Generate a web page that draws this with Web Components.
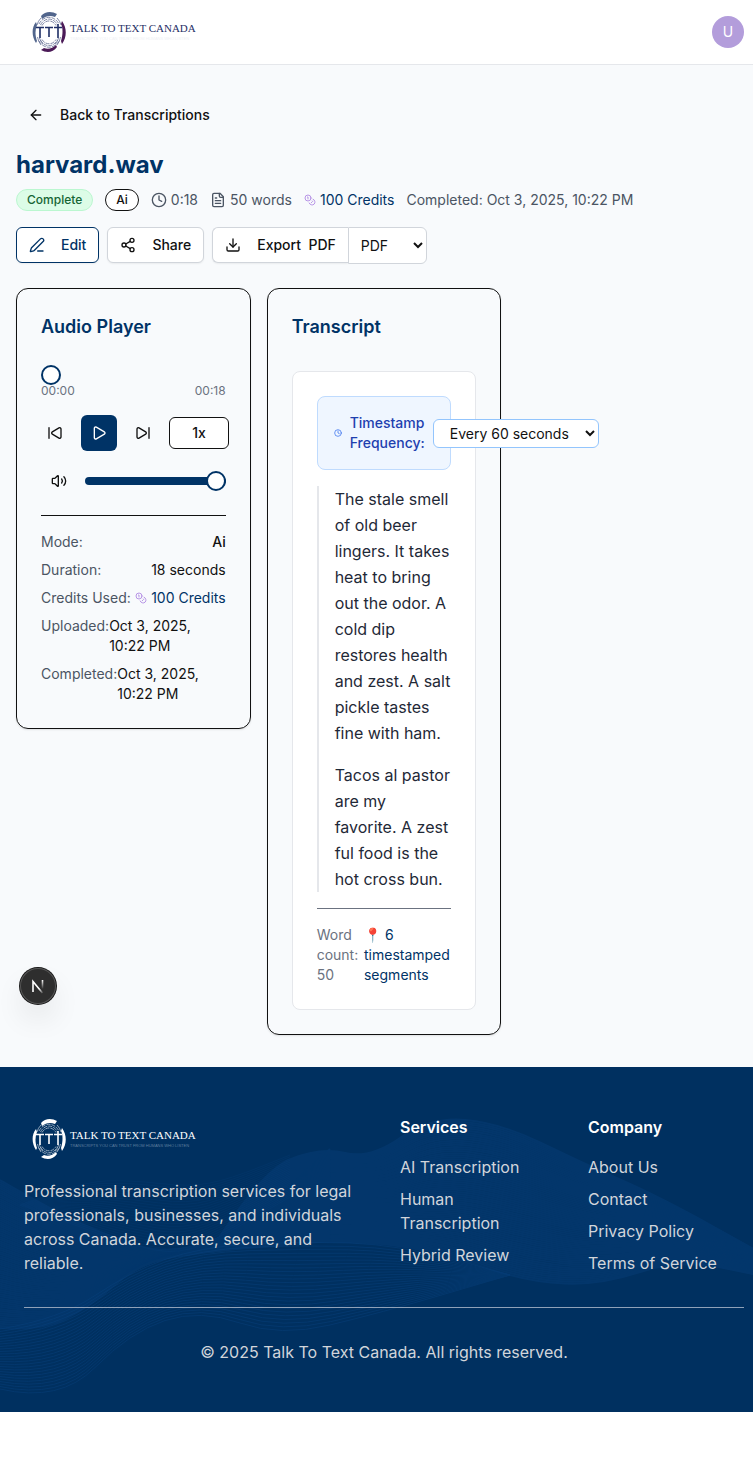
<!DOCTYPE html>
<html lang="en">
<head>
<meta charset="utf-8">
<meta name="viewport" content="width=device-width, initial-scale=1">
<title>harvard.wav – Talk To Text Canada</title>
<style>
  html { overflow-x: hidden; background: #fff; }
  body { margin: 0; min-width: 768px; font: 14px/20px Inter, "Liberation Sans", sans-serif; color: #111; }
</style>
</head>
<body>
<site-header></site-header>
<transcription-page></transcription-page>
<site-footer></site-footer>

<script>
const define = (name, html, setup) => {
  const template = document.createElement('template');
  template.innerHTML = html;
  customElements.define(name, class extends HTMLElement {
    constructor() {
      super();
      this.attachShadow({ mode: 'open' }).append(template.content.cloneNode(true));
    }
    connectedCallback() { if (setup) setup(this, this.shadowRoot); }
  });
};

const ICONS = {
  back: '<path d="m12 19-7-7 7-7"/><path d="M19 12H5"/>',
  clock: '<circle cx="12" cy="12" r="10"/><path d="M12 6v6l4 2"/>',
  file: '<path d="M15 2H6a2 2 0 0 0-2 2v16a2 2 0 0 0 2 2h12a2 2 0 0 0 2-2V7Z"/><path d="M14 2v4a2 2 0 0 0 2 2h4"/><path d="M10 9H8"/><path d="M16 13H8"/><path d="M16 17H8"/>',
  coins: '<circle cx="8" cy="8" r="6"/><path d="M18.09 10.37A6 6 0 1 1 10.34 18"/><path d="M7 6h1v4"/><path d="m16.71 13.88.7.71-2.82 2.82"/>',
  pen: '<path d="M13 21h8"/><path d="M21.174 6.812a1 1 0 0 0-3.986-3.987L3.842 16.174a2 2 0 0 0-.5.83l-1.321 4.352a.5.5 0 0 0 .623.622l4.353-1.32a2 2 0 0 0 .83-.497z"/>',
  share: '<circle cx="18" cy="5" r="3"/><circle cx="6" cy="12" r="3"/><circle cx="18" cy="19" r="3"/><path d="m8.59 13.51 6.83 3.98"/><path d="m15.41 6.51-6.82 3.98"/>',
  download: '<path d="M12 15V3"/><path d="M21 15v4a2 2 0 0 1-2 2H5a2 2 0 0 1-2-2v-4"/><path d="m7 10 5 5 5-5"/>',
  prev: '<path d="M17.971 4.285A2 2 0 0 1 21 6v12a2 2 0 0 1-3.029 1.715l-9.997-5.998a2 2 0 0 1-.003-3.432z"/><path d="M3 20V4"/>',
  play: '<path d="M5 5a2 2 0 0 1 3.008-1.728l11.997 6.998a2 2 0 0 1 .003 3.458l-12 7A2 2 0 0 1 5 19z"/>',
  next: '<path d="M21 4v16"/><path d="M6.029 4.285A2 2 0 0 0 3 6v12a2 2 0 0 0 3.029 1.715l9.997-5.998a2 2 0 0 0 .003-3.432z"/>',
  volume: '<path d="M11 4.702a.705.705 0 0 0-1.203-.498L6.413 7.587A1.4 1.4 0 0 1 5.416 8H3a1 1 0 0 0-1 1v6a1 1 0 0 0 1 1h2.416a1.4 1.4 0 0 1 .997.413l3.383 3.384A.705.705 0 0 0 11 19.298z"/><path d="M16 9a5 5 0 0 1 0 6"/><path d="M19.364 18.364a9 9 0 0 0 0-12.728"/>'
};

define('ui-icon', `
  <style>
    :host { display: block; flex: none; width: 16px; height: 16px; }
    svg { display: block; width: 100%; height: 100%; fill: none; stroke: currentColor; stroke-width: 2; stroke-linecap: round; stroke-linejoin: round; }
  </style>
  <svg viewBox="0 0 24 24" aria-hidden="true"></svg>`,
  (host, root) => { root.querySelector('svg').innerHTML = ICONS[host.getAttribute('name')]; });

define('brand-logo', `
  <style>
    :host { display: block; width: 180px; height: 48px; --mark: #1f2f66; --top: #51658c; --base: #4b1a57; --tag: #f0f1f5; }
    :host([light]) { --mark: #fff; --top: #fff; --base: #fff; --tag: #5f7f9f; }
    a { display: flex; align-items: center; gap: 4px; height: 100%; padding-left: 8px; color: var(--mark); text-decoration: none; }
    svg { flex: none; display: block; width: 34px; height: 42px; fill: none; stroke: var(--mark); }
    .words { display: flex; flex-direction: column; white-space: nowrap; font-family: "Liberation Serif", serif; }
    .name { font-size: 11px; line-height: 14px; }
    .tag { font: 4px/8px "Liberation Sans", sans-serif; color: var(--tag); }
  </style>
  <a href="#">
    <svg viewBox="0 0 34 42" aria-hidden="true">
      <g stroke-width=".8" opacity=".7">
        <path d="M7 13A12 15 0 0 1 27 13M8.500 14A10 12.500 0 0 1 25.500 14M10 14.500A8.500 10.500 0 0 1 24 14.500M7 30A12 14 0 0 0 27 30M8.500 29A10 12 0 0 0 25.500 29M10 28.500A8.500 10 0 0 0 24 28.500" stroke-dasharray="4 1"/>
        <path d="M5.500 26Q6 30 9 34M7.500 27Q8 30 11 33M28.500 26Q28 30 25 34M26.500 27Q26 30 23 33M5 14Q6 10 9 7M29 14Q28 10 25 7"/>
      </g>
      <path d="M9 5C13 0 20 0 25 3L23 6C18 4 14 5 10 8Z" fill="var(--top)" stroke="none"/>
      <path d="M25 36C21 42 14 42 9 39L12 37C16 39 21 37 24 34Z" fill="var(--base)" stroke="none"/>
      <path d="M4 11C-1 17 0 26 4 32L5 30C3 24 3 19 5 14Z" fill="var(--top)" stroke="none"/>
      <path d="M30 10C35 17 35 26 30 33L29 30C31 23 31 17 29 13Z" fill="var(--base)" stroke="none"/>
      <path d="M4 16.500H12M8 16.500V27M13 16.500H21M17 16.500V26M22 16.500H30M26 13V27" stroke-width="1.600"/>
    </svg>
    <span class="words"><span class="name">TALK TO TEXT CANADA</span><span class="tag">TRANSCRIPTS YOU CAN TRUST FROM HUMANS WHO LISTEN</span></span>
  </a>`);

define('site-header', `
  <style>
    :host { display: block; background: #fff; border-bottom: 1px solid #e5e7eb; }
    header { display: flex; align-items: center; justify-content: space-between; height: 64px; padding: 0 24px; }
    button { width: 32px; height: 32px; padding: 0; border: 0; border-radius: 50%; background: #b39ddb; color: #fff; font: 14px/20px Inter, sans-serif; }
  </style>
  <header><brand-logo></brand-logo><button aria-label="Account">U</button></header>`);

define('ui-button', `
  <style>
    :host { display: block; flex: none; }
    button { box-sizing: border-box; display: flex; align-items: center; gap: 16px; height: 36px; padding: 0 12px; border: 1px solid #d1d5db; border-radius: 6px; background: #fff; color: #111; font: 500 14px/20px Inter, sans-serif; box-shadow: 0 1px 2px rgb(0 0 0 / .06); }
    span { white-space: pre; }
    :host([kind=ghost]) button { border: 0; background: none; box-shadow: none; }
    :host([kind=primary]) button { border-color: #036; color: #036; }
    :host([joined]) button { border-right: 0; border-radius: 6px 0 0 6px; }
  </style>
  <button><ui-icon></ui-icon><span><slot></slot></span></button>`,
  (host, root) => {
    const icon = document.createElement('ui-icon');
    icon.setAttribute('name', host.getAttribute('icon'));
    root.querySelector('ui-icon').replaceWith(icon);
  });

define('status-badge', `
  <style>
    :host { display: block; padding: 2px 10px; border: 1px solid #111; border-radius: 12px; background: #fff; color: #111; font-size: 12px; line-height: 16px; font-weight: 500; }
    :host([kind=success]) { border-color: #bbf7d0; background: #dcfce7; color: #166534; }
  </style>
  <slot></slot>`);

define('credit-amount', `
  <style>
    :host { display: flex; align-items: center; gap: 4px; color: #036; white-space: nowrap; }
    ui-icon { width: 12px; height: 12px; color: #b794e6; }
  </style>
  <ui-icon name="coins"></ui-icon><span><slot></slot></span>`);

define('panel-card', `
  <style>
    :host { display: block; box-sizing: border-box; padding: 24px; border: 1px solid #111; border-radius: 12px; box-shadow: 0 1px 2px rgb(0 0 0 / .1); min-width: 0; }
    h2 { margin: 0 0 30px; color: #036; font-size: 18px; line-height: 28px; font-weight: 600; }
  </style>
  <h2></h2><slot></slot>`,
  (host, root) => { root.querySelector('h2').textContent = host.getAttribute('heading'); });

define('range-slider', `
  <style>
    :host { display: block; height: 8px; }
    input { -webkit-appearance: none; appearance: none; display: block; width: 100%; height: 8px; margin: 0; border-radius: 4px; background: transparent; }
    :host([filled]) input { background: #036; }
    input::-webkit-slider-runnable-track { height: 8px; }
    input::-webkit-slider-thumb { -webkit-appearance: none; box-sizing: border-box; width: 20px; height: 20px; margin-top: -6px; border: 2px solid #036; border-radius: 50%; background: #fff; }
  </style>
  <input type="range" min="0" max="100">`,
  (host, root) => {
    const input = root.querySelector('input');
    input.value = host.getAttribute('value');
    input.setAttribute('aria-label', host.getAttribute('label'));
  });

define('audio-player', `
  <style>
    :host { display: block; }
    .times { display: flex; justify-content: space-between; margin: 4px 0 16px; font-size: 12px; line-height: 16px; color: #6b7280; }
    .controls { display: flex; align-items: center; gap: 12px; }
    button { flex: none; display: flex; align-items: center; justify-content: center; width: 28px; height: 36px; padding: 0; border: 0; border-radius: 6px; background: none; color: #111; font: 500 14px/20px Inter, sans-serif; }
    .play { width: 36px; background: #036; color: #fff; }
    .speed { width: 60px; height: 32px; border: 1px solid #111; background: #fff; }
    .volume { display: flex; align-items: center; gap: 8px; margin: 12px 0 16px; }
    .volume button { width: 36px; }
    range-slider { flex: 1; }
    dl { display: grid; gap: 8px; margin: 0; padding-top: 16px; border-top: 1px solid #111; }
    dl div { display: flex; justify-content: space-between; }
    dt { color: #4b5563; white-space: nowrap; }
    dd { margin: 0; }
    .strong { font-weight: 500; }
  </style>
  <range-slider value="0" label="Position"></range-slider>
  <div class="times"><span>00:00</span><span>00:18</span></div>
  <div class="controls">
    <button aria-label="Previous"><ui-icon name="prev"></ui-icon></button>
    <button class="play" aria-label="Play"><ui-icon name="play"></ui-icon></button>
    <button aria-label="Next"><ui-icon name="next"></ui-icon></button>
    <button class="speed">1x</button>
  </div>
  <div class="volume">
    <button aria-label="Mute"><ui-icon name="volume"></ui-icon></button>
    <range-slider filled value="100" label="Volume"></range-slider>
  </div>
  <dl>
    <div><dt>Mode:</dt><dd class="strong">Ai</dd></div>
    <div><dt>Duration:</dt><dd>18 seconds</dd></div>
    <div><dt>Credits Used:</dt><dd><credit-amount>100 Credits</credit-amount></dd></div>
    <div><dt>Uploaded:</dt><dd>Oct 3, 2025, 10:22 PM</dd></div>
    <div><dt>Completed:</dt><dd>Oct 3, 2025, 10:22 PM</dd></div>
  </dl>`);

define('transcript-view', `
  <style>
    :host { display: block; padding: 24px; border: 1px solid #e5e7eb; border-radius: 8px; background: #fff; }
    .frequency { display: flex; align-items: center; gap: 8px; padding: 16px; border: 1px solid #bfdbfe; border-radius: 8px; background: #eff6ff; }
    .frequency ui-icon { width: 8px; height: 8px; color: #2563eb; }
    label { color: #1e40af; font-weight: 500; }
    select { flex: none; box-sizing: border-box; width: 166px; height: 29px; padding: 4px 12px; border: 1px solid #93c5fd; border-radius: 6px; background: #fff; color: #111; font: 14px Inter, sans-serif; }
    article { margin: 16px 0; padding-left: 16px; border-left: 2px solid #e5e7eb; color: #1f2937; font-size: 16px; line-height: 26px; }
    p { margin: 0; }
    p + p { margin-top: 16px; }
    .summary { display: flex; justify-content: space-between; padding-top: 16px; border-top: 1px solid #6b7280; color: #6b7280; }
    .segments { color: #036; }
  </style>
  <div class="frequency">
    <ui-icon name="clock"></ui-icon>
    <label for="interval">Timestamp Frequency:</label>
    <select id="interval"><option>Every 60 seconds</option></select>
  </div>
  <article>
    <p>The stale smell of old beer lingers. It takes heat to bring out the odor. A cold dip restores health and zest. A salt pickle tastes fine with ham.</p>
    <p>Tacos al pastor are my favorite. A zest ful food is the hot cross bun.</p>
  </article>
  <div class="summary"><span>Word count: 50</span><span class="segments">📍 6 timestamped segments</span></div>`);

define('dev-badge', `
  <style>
    :host { position: absolute; left: 20px; bottom: 63px; }
    button { display: block; width: 36px; height: 36px; padding: 0; border: 0; border-radius: 50%; background: #2e2e2e; box-shadow: 0 0 0 1px #171717, inset 0 0 0 1px #555, 0 16px 32px -8px rgb(0 0 0 / .24); }
    svg { display: block; width: 36px; height: 36px; fill: none; stroke-width: 1.600; }
  </style>
  <button aria-label="Developer tools">
    <svg viewBox="0 0 36 36" aria-hidden="true">
      <defs>
        <linearGradient id="a" gradientUnits="userSpaceOnUse" x1="17" y1="17" x2="24" y2="25"><stop offset=".4" stop-color="#fff"/><stop offset="1" stop-color="#fff" stop-opacity="0"/></linearGradient>
        <linearGradient id="b" gradientUnits="userSpaceOnUse" x1="22" y1="12" x2="22" y2="21"><stop stop-color="#fff"/><stop offset="1" stop-color="#fff" stop-opacity="0"/></linearGradient>
      </defs>
      <path d="M13 24V13.500L22.500 25" stroke="url(#a)"/><path d="M22.500 12V21" stroke="url(#b)"/>
    </svg>
  </button>`);

define('transcription-page', `
  <style>
    :host { display: block; position: relative; padding: 32px 16px; background: #f8fafc; }
    h1 { margin: 16px 0 8px; color: #036; font-size: 24px; line-height: 32px; font-weight: 700; }
    .meta { display: flex; align-items: center; gap: 12px; color: #4b5563; }
    .item { display: flex; align-items: center; gap: 4px; }
    .actions { display: flex; align-items: flex-start; gap: 8px; margin: 16px 0 24px; }
    .export { display: flex; }
    select { box-sizing: border-box; width: 79px; height: 37px; padding: 8px; border: 1px solid #d1d5db; border-radius: 0 6px 6px 0; background: #fff; color: #111; font: 14px Inter, sans-serif; }
    .cards { display: grid; grid-template-columns: repeat(3, minmax(0, 1fr)); gap: 16px; align-items: start; }
  </style>
  <ui-button kind="ghost" icon="back">Back to Transcriptions</ui-button>
  <h1>harvard.wav</h1>
  <div class="meta">
    <status-badge kind="success">Complete</status-badge>
    <status-badge>Ai</status-badge>
    <span class="item"><ui-icon name="clock"></ui-icon><span>0:18</span></span>
    <span class="item"><ui-icon name="file"></ui-icon><span>50 words</span></span>
    <credit-amount>100 Credits</credit-amount>
    <span>Completed: Oct 3, 2025, 10:22 PM</span>
  </div>
  <div class="actions">
    <ui-button kind="primary" icon="pen">Edit</ui-button>
    <ui-button icon="share">Share</ui-button>
    <div class="export">
      <ui-button joined icon="download">Export  PDF</ui-button>
      <select aria-label="Export format"><option>PDF</option><option>DOCX</option><option>TXT</option></select>
    </div>
  </div>
  <div class="cards">
    <panel-card heading="Audio Player"><audio-player></audio-player></panel-card>
    <panel-card heading="Transcript"><transcript-view></transcript-view></panel-card>
  </div>
  <dev-badge></dev-badge>`);

/* Wave mesh: smooth lines blended step by step between an upper and a lower edge. */
const smooth = pts => {
  let d = `M${pts[0]}`;
  for (let i = 1; i < pts.length - 1; i++) {
    const [x, y] = pts[i], [nx, ny] = pts[i + 1];
    d += `Q${x} ${y} ${(x + nx) / 2} ${(y + ny) / 2}`;
  }
  return d + `L${pts[pts.length - 1]}`;
};
const blend = (a, b, t) => a.map(([x, y], i) => [x + (b[i][0] - x) * t, y + (b[i][1] - y) * t]);
const mesh = (a, b, n) => Array.from({ length: n + 1 }, (_, i) => `<path d="${smooth(blend(a, b, i / n))}"/>`).join('');

define('wave-backdrop', `
  <style>
    :host { display: block; position: absolute; inset: 0; }
    svg { display: block; width: 100%; height: 100%; fill: none; stroke: #0a4482; }
  </style>
  <svg viewBox="0 0 768 345" preserveAspectRatio="none" aria-hidden="true"></svg>`,
  (host, root) => {
    const right = [
      [[210, 185], [260, 105], [320, 80], [370, 92], [430, 50], [500, 56], [580, 95], [660, 130], [768, 190]],
      [[210, 185], [270, 175], [340, 174], [400, 178], [460, 192], [530, 215], [600, 218], [680, 192], [768, 210]]];
    const left = [
      [[0, 113], [50, 142], [110, 170], [170, 188], [240, 165], [330, 82]],
      [[0, 261], [40, 264], [90, 240], [140, 195], [210, 184], [330, 174]]];
    const low = [
      [[0, 262], [60, 252], [130, 205], [200, 180], [300, 174], [400, 178], [510, 208]],
      [[0, 322], [60, 336], [130, 265], [200, 242], [280, 270], [380, 246], [510, 208]]];
    const crest = [
      [[20, 138], [80, 115], [130, 113], [190, 120], [230, 112], [290, 88]],
      [[20, 138], [80, 160], [130, 178], [180, 188], [230, 165], [290, 130]]];
    root.querySelector('svg').innerHTML =
      `<g opacity=".34" stroke-width="2">${mesh(...right, 70)}${mesh(...left, 70)}</g>` +
      `<g opacity=".4">${mesh(...low, 24)}</g><g opacity=".2">${mesh(...crest, 24)}</g>`;
  });

define('footer-links', `
  <style>
    :host { display: block; }
    h3 { margin: 0 0 16px; color: #fff; font-size: 16px; line-height: 24px; font-weight: 600; }
    nav { display: grid; gap: 8px; }
    ::slotted(a) { color: #d1d5db; text-decoration: none; }
  </style>
  <h3></h3><nav><slot></slot></nav>`,
  (host, root) => { root.querySelector('h3').textContent = host.getAttribute('heading'); });

define('site-footer', `
  <style>
    :host { display: block; position: relative; background: #003060; color: #d1d5db; font-size: 16px; line-height: 24px; }
    footer { position: relative; padding: 48px 24px; }
    .columns { display: grid; grid-template-columns: repeat(4, minmax(0, 1fr)); gap: 32px; padding-bottom: 32px; border-bottom: 1px solid #8fa1b8; }
    .about { grid-column: span 2; }
    p { margin: 0; }
    .about p { margin-top: 16px; }
    .legal { padding-top: 32px; text-align: center; }
  </style>
  <wave-backdrop></wave-backdrop>
  <footer>
    <div class="columns">
      <div class="about">
        <brand-logo light></brand-logo>
        <p>Professional transcription services for legal professionals, businesses, and individuals across Canada. Accurate, secure, and reliable.</p>
      </div>
      <footer-links heading="Services"><a href="#">AI Transcription</a><a href="#">Human Transcription</a><a href="#">Hybrid Review</a></footer-links>
      <footer-links heading="Company"><a href="#">About Us</a><a href="#">Contact</a><a href="#">Privacy Policy</a><a href="#">Terms of Service</a></footer-links>
    </div>
    <p class="legal">© 2025 Talk To Text Canada. All rights reserved.</p>
  </footer>`);
</script>
</body>
</html>
